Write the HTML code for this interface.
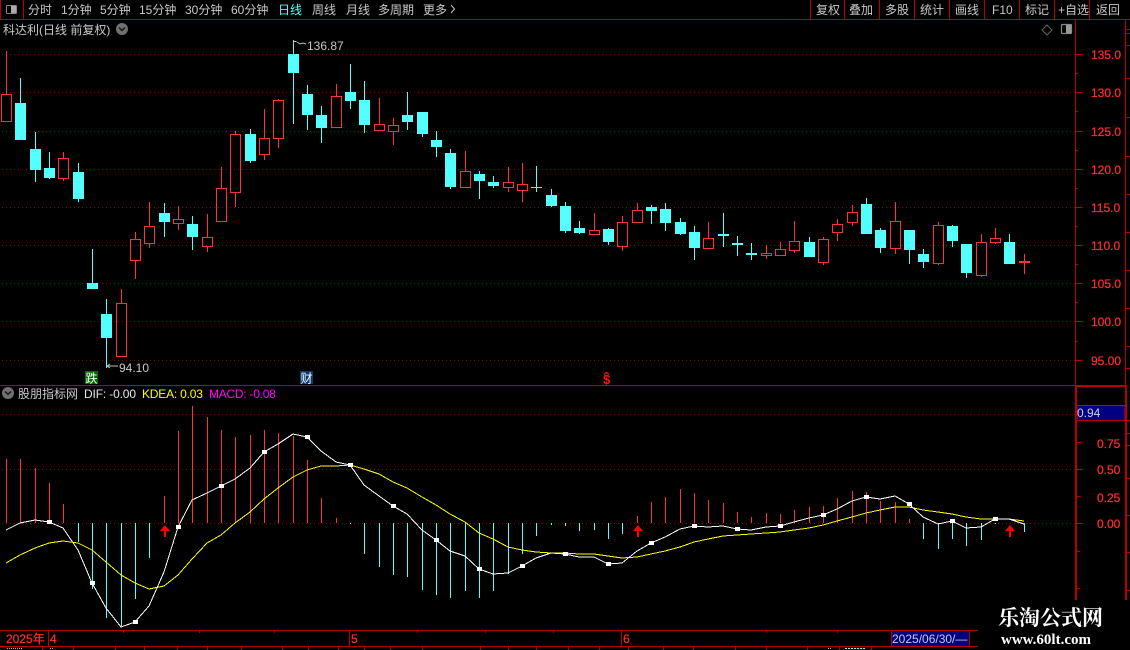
<!DOCTYPE html>
<html><head><meta charset="utf-8"><style>
html,body{margin:0;padding:0;background:#000;width:1130px;height:650px;overflow:hidden}
svg{display:block}
text{font-family:"Liberation Sans","WenQuanYi Zen Hei","Noto Sans CJK SC",sans-serif;font-size:12px}
.t{fill:#c8c8c8}.p{fill:#ff2a2a;font-size:12px;stroke:#ff2a2a;stroke-width:.25}
.c{shape-rendering:crispEdges}
</style></head><body>
<svg width="1130" height="650" viewBox="0 0 1130 650">
<rect width="1130" height="650" fill="#000"/>
<!-- grid -->
<g class="c" stroke="#9a0000" stroke-dasharray="1 3" fill="none">
<path d="M2 54.5H1075M2 92.5H1075M2 131.5H1075M2 169.5H1075M2 207.5H1075M2 245.5H1075M2 283.5H1075M2 321.5H1075M2 360.5H1075"/>
<path d="M2 414.5H1075M2 469.5H1075M2 523.5H1075"/>
</g>
<!-- frame -->
<g class="c" stroke="#b80000" fill="none">
<path d="M0 19.5H1130M0 385.5H1075"/>
<path d="M1075.5 19V385M0.5 0V19M23.5 0V19M810.5 0V19M844.5 0V19M879.5 0V19M914.5 0V19M949.5 0V19M984.5 0V19M1019.5 0V19M1054.5 0V19M1089.5 0V19"/>
<path d="M1125.5 19V385"/>
<path d="M1076 54.5h6M1076 92.5h6M1076 131.5h6M1076 169.5h6M1076 207.5h6M1076 245.5h6M1076 283.5h6M1076 321.5h6M1076 360.5h6M1076 73.5h2M1076 111.5h2M1076 150.5h2M1076 188.5h2M1076 226.5h2M1076 264.5h2M1076 302.5h2M1076 341.5h2"/>
<path d="M1125 29.5h5M1125 33.5h5M1125 45.5h5M1125 78.5h5M1125 117.5h5M1125 156.5h5M1125 194.5h5M1125 232.5h5M1125 270.5h5M1125 308.5h5M1125 346.5h5M1125 368.5h5"/>
<path d="M1077 442.5h4M1077 469.5h5M1077 496.5h4M1077 523.5h6M1077 551.5h3M1077 588.5h3M1126 420.5h4M1126 433.5h4M1126 445.5h4M1126 478.5h4M1126 515.5h4M1126 552.5h4M1126 590.5h4"/>
<path d="M0 630.5H978M0 646.5H978M48.5 631V646M349.5 631V646M621.5 631V646M891.5 631V646M969.5 631V646"/>
<path d="M123.5 631v2M199.5 631v2M274.5 631v2M417.5 631v2M485.5 631v2M553.5 631v2M766.5 631v2M837.5 631v2"/>
<path d="M42.5 647v3M73.5 647v3M115.5 647v3M144.5 647v3M177.5 647v3M207.5 647v3M241.5 647v3M282.5 647v3M308.5 647v3M338.5 647v3M364.5 647v3M390.5 647v3M422.5 647v3M480.5 647v3M508.5 647v3M536.5 647v3M568.5 647v3M599.5 647v3M628.5 647v3M663.5 647v3M693.5 647v3M735.5 647v3M766.5 647v3M807.5 647v3M839.5 647v3M871.5 647v3"/>
</g>
<path class="c" fill="none" stroke="#b0b0b0" stroke-dasharray="1 1" d="M7 648.5h15M50 648.5h3M828 648.5h4"/>
<path class="c" fill="none" stroke="#54ffff" stroke-dasharray="2 1" d="M845 648.5h21"/>
<rect class="c" x="1075" y="385" width="2" height="215" fill="#b80000"/>
<rect class="c" x="1125" y="385" width="2" height="215" fill="#b80000"/>
<rect class="c" x="1075" y="385" width="52" height="2" fill="#b80000"/>
<rect class="c" x="1077" y="405.5" width="48" height="15" fill="#000080" stroke="#b80000"/>
<rect class="c" x="892" y="631" width="77" height="15" fill="#000080"/>
<!-- toolbar text -->
<g class="t">
<text x="28" y="14">分时</text><text x="61" y="14">1分钟</text><text x="100" y="14">5分钟</text><text x="139" y="14">15分钟</text><text x="185" y="14">30分钟</text><text x="231" y="14">60分钟</text>
<text x="278" y="14" style="fill:#54ffff">日线</text><text x="312" y="14">周线</text><text x="346" y="14">月线</text><text x="378" y="14">多周期</text><text x="423" y="14">更多</text>
<text x="816" y="14">复权</text><text x="849" y="14">叠加</text><text x="885" y="14">多股</text><text x="920" y="14">统计</text><text x="955" y="14">画线</text><text x="992" y="14">F10</text><text x="1025" y="14">标记</text><text x="1058" y="14">+自选</text><text x="1096" y="14">返回</text>
<text x="3" y="34">科达利(日线 前复权)</text>
</g>
<path d="M451 5l3.5 4-3.5 4" fill="none" stroke="#c0c0c0"/>
<!-- icons -->
<rect x="6.5" y="5.5" width="10" height="8" rx="1" fill="none" stroke="#888"/><rect x="11" y="6" width="5" height="7" fill="#aaa"/>
<rect x="1061.5" y="24.5" width="10" height="9" rx="1" fill="none" stroke="#888" stroke-width="1.2"/><rect x="1066" y="25" width="5" height="8" fill="#999"/>
<path d="M1047 25l5 5-5 5-5-5z" fill="none" stroke="#666"/>
<circle cx="122" cy="29" r="6" fill="#707070"/><path d="M119 27.5l3 3 3-3" fill="none" stroke="#111" stroke-width="1.4"/>
<circle cx="8" cy="393" r="6" fill="#707070"/><path d="M5 391.5l3 3 3-3" fill="none" stroke="#111" stroke-width="1.4"/>
<!-- candles -->
<path class="c" fill="none" stroke="#ff3232" d="M1.5 94.5h10v27h-10zM58.5 158.5h10v20h-10zM116.5 303.5h10v53h-10zM130.5 239.5h10v21h-10zM144.5 226.5h10v17h-10zM173.5 219.5h10v4h-10zM202.5 237.5h10v9h-10zM216.5 188.5h10v33h-10zM230.5 134.5h10v58h-10zM259.5 138.5h10v16h-10zM273.5 100.5h10v38h-10zM331.5 96.5h10v31h-10zM374.5 124.5h10v6h-10zM388.5 125.5h10v6h-10zM460.5 171.5h10v16h-10zM503.5 182.5h10v5h-10zM517.5 184.5h10v6h-10zM589.5 230.5h10v4h-10zM617.5 222.5h10v24h-10zM632.5 210.5h10v12h-10zM703.5 238.5h10v10h-10zM761.5 253.5h10v2h-10zM775.5 249.5h10v6h-10zM789.5 241.5h10v9h-10zM818.5 239.5h10v23h-10zM832.5 224.5h10v8h-10zM847.5 212.5h10v10h-10zM890.5 221.5h10v27h-10zM933.5 225.5h10v38h-10zM976.5 242.5h10v33h-10zM990.5 238.5h10v4h-10z
M6.5 51V94M63.5 152V158M63.5 179V181M121.5 289V303M135.5 232V239M135.5 261V279M149.5 202V226M149.5 244V248M178.5 206V219M178.5 224V230M207.5 214V237M207.5 247V252M221.5 167V188M235.5 131V134M235.5 193V207M264.5 109V138M264.5 155V160M278.5 99V100M278.5 139V148M336.5 84V96M393.5 118V125M393.5 132V145M379.5 98V124M465.5 151V171M508.5 167V182M508.5 188V192M522.5 163V184M522.5 191V202M594.5 213V230M622.5 216V222M622.5 247V251M637.5 203V210M708.5 222V238M766.5 245V253M766.5 256V259M780.5 242V249M794.5 221V241M794.5 251V253M823.5 237V239M823.5 263V265M837.5 219V224M837.5 233V241M852.5 205V212M852.5 223V226M895.5 202V221M895.5 249V254M938.5 222V225M938.5 264V265M981.5 234V242M981.5 276V277M995.5 228V238M995.5 243V244M1024.5 254V274"/>
<path class="c" fill="#ff3232" d="M1019 261h11v2h-11z"/>
<path class="c" fill="none" stroke="#54ffff" d="M20.5 78V140M35.5 132V182M49.5 152V179M78.5 163V202M92.5 249V289M106.5 299V368M164.5 203V237M192.5 216V250M250.5 129V163M293.5 40V124M307.5 85V130M321.5 106V143M350.5 64V109M364.5 81V133M407.5 92V130M422.5 112V137M436.5 131V157M450.5 149V189M479.5 171V199M493.5 176V188M536.5 166V192M551.5 189V207M565.5 202V233M579.5 221V234M608.5 228V245M651.5 205V224M665.5 203V231M680.5 218V235M694.5 226V260M723.5 213V247M737.5 236V256M751.5 243V260M809.5 237V257M866.5 198V234M880.5 228V253M909.5 230V264M923.5 249V268M952.5 225V247M966.5 244V278M1009.5 234V264"/>
<path class="c" fill="#54ffff" d="M15 103h11V140h-11zM30 149h11V170h-11zM44 168h11V178h-11zM73 172h11V199h-11zM87 283h11V289h-11zM101 314h11V338h-11zM159 213h11V222h-11zM187 224h11V237h-11zM245 134h11V161h-11zM288 54h11V73h-11zM302 94h11V115h-11zM316 115h11V128h-11zM345 92h11V101h-11zM359 100h11V125h-11zM402 115h11V122h-11zM417 112h11V134h-11zM431 140h11V147h-11zM445 153h11V187h-11zM474 174h11V181h-11zM488 182h11V186h-11zM531 187h11V188h-11zM546 195h11V206h-11zM560 206h11V231h-11zM574 228h11V233h-11zM603 229h11V242h-11zM646 207h11V211h-11zM660 209h11V223h-11zM675 222h11V234h-11zM689 232h11V248h-11zM718 234h11V236h-11zM732 243h11V245h-11zM746 253h11V255h-11zM804 242h11V257h-11zM861 204h11V234h-11zM875 230h11V248h-11zM904 230h11V250h-11zM918 254h11V262h-11zM947 226h11V241h-11zM961 244h11V273h-11zM1004 242h11V264h-11z"/>
<!-- extreme labels -->
<path d="M293.5 41.5h3M293.5 41.5v3M297 42l3 2 3-1 3 1" fill="none" stroke="#c0c0c0"/>
<text x="307" y="50" class="t">136.87</text>
<path d="M107 366h11M107 366l3-2M107 366l3 2" fill="none" stroke="#c0c0c0"/>
<text x="119" y="372" class="t">94.10</text>
<rect class="c" x="85" y="371" width="13" height="13" fill="#006a00"/><text x="85.5" y="382.5" style="fill:#fff;font-size:12px">跌</text>
<rect class="c" x="300" y="371" width="13" height="13" fill="#0a3a70"/><text x="300.5" y="382.5" style="fill:#fff;font-size:12px">财</text>
<path d="M604 374.5l2.5-2 2.5 2" fill="none" stroke="#ff1010" stroke-width="1.2"/>
<text x="603" y="384" style="fill:#ff1010;font-size:13px;font-weight:bold">$</text>
<!-- price labels -->
<g>
<text x="1091" y="59" class="p">135.0</text><text x="1091" y="97" class="p">130.0</text><text x="1091" y="136" class="p">125.0</text><text x="1091" y="174" class="p">120.0</text><text x="1091" y="212" class="p">115.0</text><text x="1091" y="250" class="p">110.0</text><text x="1091" y="288" class="p">105.0</text><text x="1091" y="326" class="p">100.0</text><text x="1091" y="365" class="p">95.00</text>
<text x="1097" y="448" class="p">0.75</text><text x="1097" y="474" class="p">0.50</text><text x="1097" y="502" class="p">0.25</text><text x="1097" y="528" class="p">0.00</text>
</g>
<text x="1077" y="417" style="fill:#d0d0e8">0.94</text>
<!-- MACD header -->
<text x="18" y="398" class="t">股朋指标网</text>
<text x="84" y="398" style="fill:#e8e8e8;letter-spacing:-.15px">DIF: -0.00</text>
<text x="142" y="398" style="fill:#ffff00;letter-spacing:-.2px">KDEA: 0.03</text>
<text x="209" y="398" style="fill:#ff00ff;letter-spacing:-.25px">MACD: -0.08</text>
<!-- MACD bars -->
<path class="c" fill="none" stroke="#ff3232" d="M6.5 459V523M20.5 459V523M35.5 468V523M49.5 483V523M63.5 504V523M164.5 496V523M178.5 431V523M192.5 406V523M207.5 417V523M221.5 430V523M235.5 437V523M250.5 435V523M264.5 430V523M278.5 433V523M293.5 436V523M307.5 460V523M321.5 498V523M336.5 518V523M637.5 516V523M651.5 502V523M665.5 497V523M680.5 489V523M694.5 493V523M708.5 500V523M723.5 503V523M737.5 512V523M751.5 517V523M766.5 513V523M780.5 514V523M794.5 510V523M809.5 507V523M823.5 506V523M837.5 498V523M852.5 491V523M866.5 492V523M880.5 501V523M895.5 502V523M909.5 519V523"/>
<path class="c" fill="none" stroke="#54ffff" d="M78.5 523V542M92.5 523V589M106.5 523V618M121.5 523V626M135.5 523V599M149.5 523V558M350.5 523V524M364.5 523V554M379.5 523V567M393.5 523V575M407.5 523V577M422.5 523V590M436.5 523V595M450.5 523V598M465.5 523V591M479.5 523V598M493.5 523V591M508.5 523V574M522.5 523V554M536.5 523V536M551.5 523V525M565.5 523V526M579.5 523V531M594.5 523V530M608.5 523V539M622.5 523V534M923.5 523V539M938.5 523V549M952.5 523V539M966.5 523V546M981.5 523V540M995.5 523V524M1024.5 523V532"/>
<!-- DEA -->
<polyline class="c" fill="none" stroke="#ffff00" points="6,563 20,555 35,548 49,543 63,541 78,543 92,550 106,562 121,575 135,583 149,589 164,586 178,575 192,559 207,543 221,535 235,523 250,512 264,499 278,488 293,477 307,470 321,466 336,466 350,465 364,469 379,474 393,482 407,488 422,497 436,505 450,514 465,522 479,533 493,539 508,547 522,550 536,552 551,553 565,553 579,554 594,554 608,556 622,558 637,557 651,554 665,551 680,547 694,542 708,539 723,536 737,535 751,534 766,533 780,532 794,530 809,528 823,525 837,521 852,517 866,513 880,510 895,507 909,507 923,510 938,512 952,514 966,517 981,519 995,519 1009,519 1024,521"/>
<!-- DIF -->
<polyline class="c" fill="none" stroke="#ffffff" points="6,530 20,523 35,520 49,522 63,528 78,550 92,583 106,608 121,627 135,622 149,606 164,572 178,527 192,500 207,493 221,486 235,479 250,468 264,452 278,444 293,434 307,437 321,451 336,462 350,465 364,485 379,496 393,506 407,514 422,530 436,540 450,551 465,556 479,569 493,574 508,573 522,566 536,558 551,553 565,554 579,557 594,557 608,564 622,563 637,551 651,543 665,537 680,529 694,526 708,527 723,526 737,529 751,530 766,527 780,526 794,522 809,518 823,515 837,509 852,501 866,497 880,499 895,496 909,504 923,517 938,524 952,521 966,528 981,527 995,519 1009,519 1024,524"/>
<path class="c" fill="#fff" d="M47 520h5v4h-5zM90 581h5v4h-5zM133 620h5v4h-5zM176 525h5v4h-5zM219 484h5v4h-5zM262 450h5v4h-5zM305 435h5v4h-5zM348 463h5v4h-5zM391 504h5v4h-5zM434 538h5v4h-5zM477 567h5v4h-5zM520 564h5v4h-5zM563 552h5v4h-5zM606 562h5v4h-5zM649 541h5v4h-5zM692 524h5v4h-5zM735 527h5v4h-5zM778 524h5v4h-5zM821 513h5v4h-5zM864 495h5v4h-5zM907 502h5v4h-5zM950 519h5v4h-5zM993 517h5v4h-5z"/>
<!-- arrows -->
<path fill="#ff0000" d="M165 525l5 6h-4v6h-2v-6h-4z"/>
<path fill="#ff0000" d="M638 525l5 6h-4v6h-2v-6h-4z"/>
<path fill="#ff0000" d="M1010 525l5 6h-4v6h-2v-6h-4z"/>
<!-- bottom axis text -->
<text x="6" y="643" class="p">2025年</text>
<text x="50" y="643" class="p">4</text><text x="351" y="643" class="p">5</text><text x="623" y="643" class="p">6</text>
<text x="892" y="643" style="fill:#c8c8e0">2025/06/30/—</text>
<!-- watermark -->
<text x="998" y="625" style="fill:#fff;font-size:21px;font-weight:bold;font-family:'Noto Serif CJK SC','Noto Sans CJK SC',serif">乐淘公式网</text>
<text x="1001" y="644" style="fill:#fff;font-size:15px;font-weight:bold;font-family:'Liberation Serif',serif">www.60lt.com</text>
</svg>
</body></html>
